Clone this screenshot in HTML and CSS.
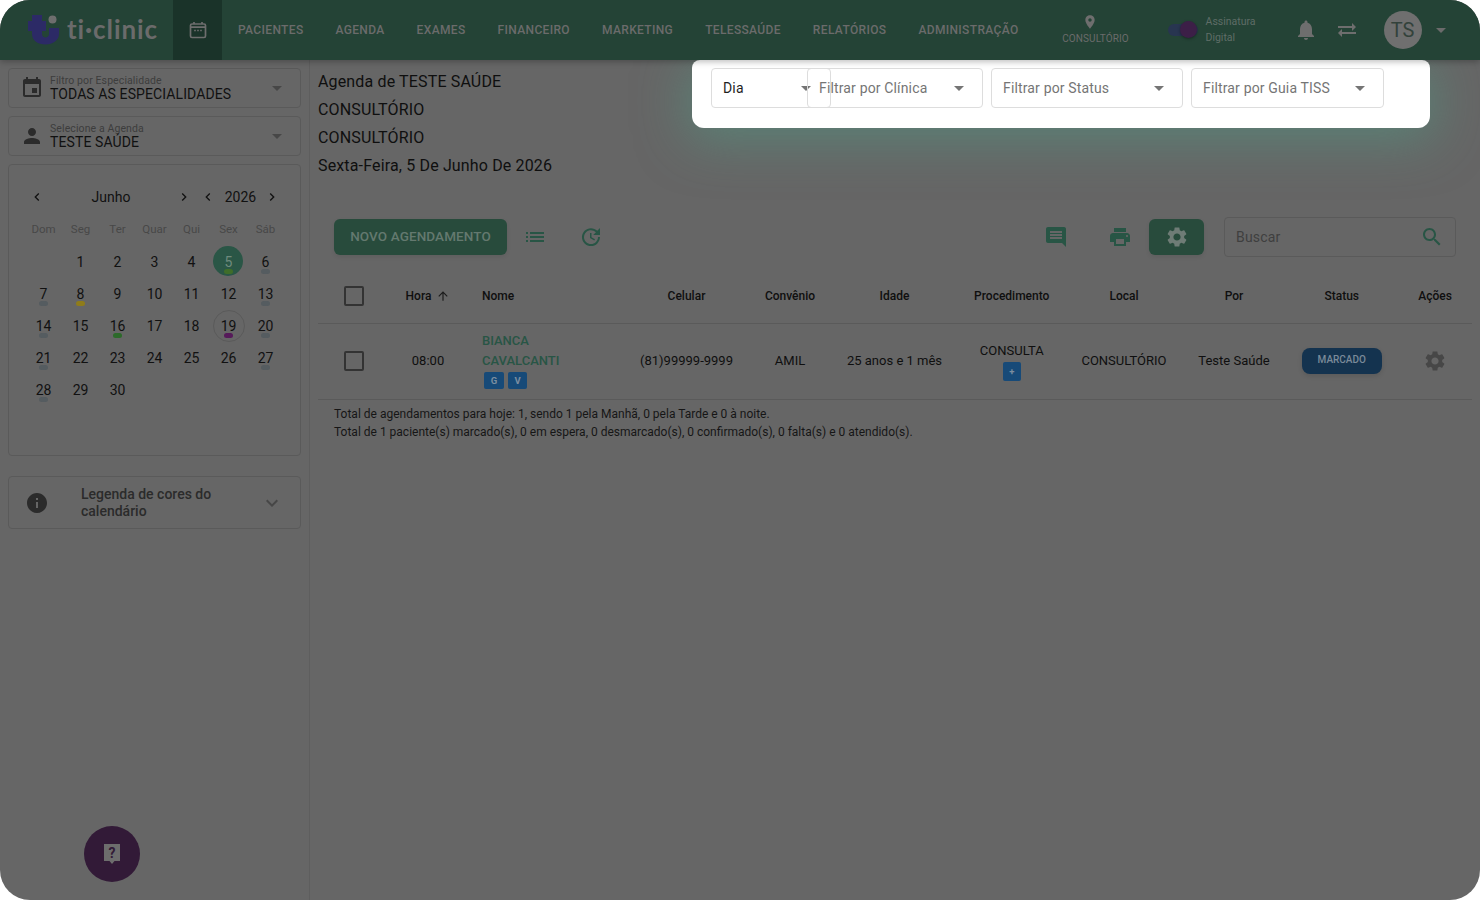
FILE: index.html
```html
<!DOCTYPE html>
<html lang="pt-BR">
<head>
<meta charset="utf-8">
<title>ti·clinic - Agenda</title>
<link rel="stylesheet" href="styles.css">
</head>
<body>
<svg class="sprite" aria-hidden="true">
  <symbol id="i-event" viewBox="0 0 24 24"><path d="M17 12h-5v5h5v-5zM16 1v2H8V1H6v2H5c-1.11 0-1.99.9-1.99 2L3 19c0 1.1.89 2 2 2h14c1.1 0 2-.9 2-2V5c0-1.1-.9-2-2-2h-1V1h-2zm3 18H5V8h14v11z"/></symbol>
  <symbol id="i-person" viewBox="0 0 24 24"><path d="M12 12c2.21 0 4-1.79 4-4s-1.79-4-4-4-4 1.79-4 4 1.79 4 4 4zm0 2c-2.67 0-8 1.34-8 4v2h16v-2c0-2.66-5.33-4-8-4z"/></symbol>
  <symbol id="i-info" viewBox="0 0 24 24"><path d="M12 2C6.48 2 2 6.48 2 12s4.48 10 10 10 10-4.48 10-10S17.52 2 12 2zm1 15h-2v-6h2v6zm0-8h-2V7h2v2z"/></symbol>
  <symbol id="i-left" viewBox="0 0 24 24"><path d="M15.41 7.41L14 6l-6 6 6 6 1.41-1.41L10.83 12z"/></symbol>
  <symbol id="i-right" viewBox="0 0 24 24"><path d="M10 6L8.59 7.41 13.17 12l-4.58 4.59L10 18l6-6z"/></symbol>
  <symbol id="i-more" viewBox="0 0 24 24"><path d="M16.59 8.59L12 13.17 7.41 8.59 6 10l6 6 6-6z"/></symbol>
  <symbol id="i-list" viewBox="0 0 24 24"><path d="M3 13h2v-2H3v2zm0 4h2v-2H3v2zm0-8h2V7H3v2zm4 4h14v-2H7v2zm0 4h14v-2H7v2zM7 7v2h14V7H7z"/></symbol>
  <symbol id="i-update" viewBox="0 0 24 24"><path d="M21 10.12h-6.78l2.74-2.82c-2.73-2.7-7.15-2.8-9.88-.1-2.73 2.71-2.73 7.08 0 9.79s7.15 2.71 9.88 0C18.32 15.65 19 14.08 19 12.1h2c0 1.98-.88 4.55-2.64 6.29-3.51 3.48-9.21 3.48-12.72 0-3.5-3.47-3.53-9.11-.02-12.58s9.14-3.47 12.65 0L21 3v7.12zM12.5 8v4.25l3.5 2.08-.72 1.21L11 13V8h1.5z"/></symbol>
  <symbol id="i-comment" viewBox="0 0 24 24"><path d="M22 4c0-1.1-.9-2-2-2H4c-1.1 0-2 .9-2 2v12c0 1.1.9 2 2 2h14l4 4V4zm-4 10H6v-2h12v2zm0-3H6V9h12v2zm0-3H6V6h12v2z"/></symbol>
  <symbol id="i-print" viewBox="0 0 24 24"><path d="M19 8H5c-1.66 0-3 1.34-3 3v6h4v4h12v-4h4v-6c0-1.66-1.34-3-3-3zm-3 11H8v-5h8v5zm3-7c-.55 0-1-.45-1-1s.45-1 1-1 1 .45 1 1-.45 1-1 1zm-1-9H6v4h12V3z"/></symbol>
  <symbol id="i-gear" viewBox="0 0 24 24"><path d="M19.14 12.94c.04-.3.06-.61.06-.94 0-.32-.02-.64-.07-.94l2.03-1.58c.18-.14.23-.41.12-.61l-1.92-3.32c-.12-.22-.37-.29-.59-.22l-2.39.96c-.5-.38-1.03-.7-1.62-.94l-.36-2.54c-.04-.24-.24-.41-.48-.41h-3.84c-.24 0-.43.17-.47.41l-.36 2.54c-.59.24-1.13.57-1.62.94l-2.39-.96c-.22-.08-.47 0-.59.22L2.74 8.87c-.12.21-.08.47.12.61l2.03 1.58c-.05.3-.09.63-.09.94s.02.64.07.94l-2.03 1.58c-.18.14-.23.41-.12.61l1.92 3.32c.12.22.37.29.59.22l2.39-.96c.5.38 1.03.7 1.62.94l.36 2.54c.05.24.24.41.48.41h3.84c.24 0 .44-.17.47-.41l.36-2.54c.59-.24 1.13-.56 1.62-.94l2.39.96c.22.08.47 0 .59-.22l1.92-3.32c.12-.22.07-.47-.12-.61l-2.01-1.58zM12 15.6c-1.98 0-3.6-1.62-3.6-3.6s1.62-3.6 3.6-3.6 3.6 1.62 3.6 3.6-1.62 3.6-3.6 3.6z"/></symbol>
  <symbol id="i-search" viewBox="0 0 24 24"><path d="M15.5 14h-.79l-.28-.27C15.41 12.59 16 11.11 16 9.5 16 5.91 13.09 3 9.5 3S3 5.91 3 9.5 5.91 16 9.5 16c1.61 0 3.09-.59 4.23-1.57l.27.28v.79l5 4.99L20.49 19l-4.99-5zm-6 0C7.01 14 5 11.99 5 9.5S7.01 5 9.5 5 14 7.01 14 9.5 11.99 14 9.5 14z"/></symbol>
  <symbol id="i-up" viewBox="0 0 24 24"><path d="M4 12l1.41 1.41L11 7.83V20h2V7.83l5.58 5.59L20 12l-8-8-8 8z"/></symbol>
  <symbol id="i-bell" viewBox="0 0 24 24"><path d="M12 22c1.1 0 2-.9 2-2h-4c0 1.1.89 2 2 2zm6-6v-5c0-3.07-1.64-5.64-4.5-6.32V4c0-.83-.67-1.5-1.5-1.5s-1.5.67-1.5 1.5v.68C7.63 5.36 6 7.92 6 11v5l-2 2v1h16v-1l-2-2z"/></symbol>
  <symbol id="i-swap" viewBox="0 0 24 24"><path d="M6.99 11L3 15l3.99 4v-3H21v-2H6.99v-3zM21 9l-3.99-4v3H3v2h14.01v3L21 9z"/></symbol>
  <symbol id="i-place" viewBox="0 0 24 24"><path d="M12 2C8.13 2 5 5.13 5 9c0 5.25 7 13 7 13s7-7.75 7-13c0-3.87-3.13-7-7-7zm0 9.5c-1.38 0-2.5-1.12-2.5-2.5s1.12-2.5 2.5-2.5 2.5 1.12 2.5 2.5-1.12 2.5-2.5 2.5z"/></symbol>
</svg>

<div class="app">
  <header class="topbar">
    <a class="logo">
      <svg class="logo-mark" viewBox="0 0 32 32" width="32" height="32" aria-hidden="true">
        <path class="logo-t" d="M4 1h10v6h4v10h-4v3c0 2 1.500 3.500 3.500 3.500s3.500-1.500 3.500-3.500v-6h10v6c0 6-6 10.500-13.500 10.500S4 26.500 4 20v-3H0V7h4z"/>
        <circle class="logo-dot" cx="24.500" cy="5.500" r="4"/>
      </svg>
      <span class="logo-text">ti·clinic</span>
    </a>
    <a class="cal-tab">
      <svg viewBox="0 0 18 18" width="18" height="18" class="cal-glyph" aria-hidden="true">
        <rect x="1.5" y="3" width="15" height="13.5" rx="1.5"/>
        <path d="M1.5 6.2h15M5 1v2M13 1v2"/>
        <path class="cal-dots" d="M5.2 9.5h1.6M8.2 9.5h1.6M11.2 9.5h1.6"/>
      </svg>
    </a>
    <nav class="nav">
      <a>Pacientes</a><a>Agenda</a><a>Exames</a><a>Financeiro</a><a>Marketing</a><a>Telessaúde</a><a>Relatórios</a><a>Administração</a>
    </nav>
    <div class="place">
      <svg class="ico16" aria-hidden="true"><use href="#i-place"/></svg>
      <span>CONSULTÓRIO</span>
    </div>
    <div class="toggle"><span class="knob"></span></div>
    <div class="sign">Assinatura<br>Digital</div>
    <svg class="ico24 top-ico bell" aria-hidden="true"><use href="#i-bell"/></svg>
    <svg class="ico24 top-ico swap" aria-hidden="true"><use href="#i-swap"/></svg>
    <div class="avatar">TS</div>
    <span class="caret caret-top"></span>
  </header>

  <div class="body">
    <aside class="sidebar">
      <div class="field">
        <svg class="ico24 dark" aria-hidden="true"><use href="#i-event"/></svg>
        <div class="field-text"><small>Filtro por Especialidade</small><b>TODAS AS ESPECIALIDADES</b></div>
        <span class="caret"></span>
      </div>
      <div class="field">
        <svg class="ico24 dark" aria-hidden="true"><use href="#i-person"/></svg>
        <div class="field-text"><small>Selecione a Agenda</small><b>TESTE SAÚDE</b></div>
        <span class="caret"></span>
      </div>
      <section class="calendar">
        <div class="cal-head">
          <svg class="ico16 black" aria-hidden="true"><use href="#i-left"/></svg>
          <span class="cal-month">Junho</span>
          <svg class="ico16 black" aria-hidden="true"><use href="#i-right"/></svg>
          <svg class="ico16 black year-prev" aria-hidden="true"><use href="#i-left"/></svg>
          <span class="cal-year">2026</span>
          <svg class="ico16 black" aria-hidden="true"><use href="#i-right"/></svg>
        </div>
        <div class="cal-grid">
          <span class="wd">Dom</span><span class="wd">Seg</span><span class="wd">Ter</span><span class="wd">Quar</span><span class="wd">Qui</span><span class="wd">Sex</span><span class="wd">Sáb</span>
          <span class="d"></span><span class="d">1</span><span class="d">2</span><span class="d">3</span><span class="d">4</span><span class="d sel">5<i class="dot olive"></i></span><span class="d">6<i class="dot"></i></span>
          <span class="d">7<i class="dot"></i></span><span class="d">8<i class="dot yellow"></i></span><span class="d">9</span><span class="d">10</span><span class="d">11</span><span class="d">12</span><span class="d">13<i class="dot"></i></span>
          <span class="d">14<i class="dot"></i></span><span class="d">15</span><span class="d">16<i class="dot leaf"></i></span><span class="d">17</span><span class="d">18</span><span class="d today">19<i class="dot purple"></i></span><span class="d">20<i class="dot"></i></span>
          <span class="d">21<i class="dot"></i></span><span class="d">22</span><span class="d">23</span><span class="d">24</span><span class="d">25</span><span class="d">26</span><span class="d">27<i class="dot"></i></span>
          <span class="d">28<i class="dot"></i></span><span class="d">29</span><span class="d">30</span>
        </div>
      </section>
      <section class="legend">
        <svg class="ico24 dark" aria-hidden="true"><use href="#i-info"/></svg>
        <span class="legend-text">Legenda de cores do calendário</span>
        <svg class="ico24 mid" aria-hidden="true"><use href="#i-more"/></svg>
      </section>
    </aside>

    <main class="main">
      <div class="titles">
        <p>Agenda de TESTE SAÚDE</p>
        <p>CONSULTÓRIO</p>
        <p>CONSULTÓRIO</p>
        <p>Sexta-Feira, 5 De Junho De 2026</p>
      </div>

      <div class="toolbar">
        <button class="btn">NOVO AGENDAMENTO</button>
        <svg class="ico24 green" aria-hidden="true"><use href="#i-list"/></svg>
        <svg class="ico24 green after-list" aria-hidden="true"><use href="#i-update"/></svg>
        <span class="spacer"></span>
        <svg class="ico24 green before-print" aria-hidden="true"><use href="#i-comment"/></svg>
        <svg class="ico24 green" aria-hidden="true"><use href="#i-print"/></svg>
        <button class="btn-gear"><svg class="ico24 light" aria-hidden="true"><use href="#i-gear"/></svg></button>
        <div class="search"><span>Buscar</span><svg class="ico24 green" aria-hidden="true"><use href="#i-search"/></svg></div>
      </div>

      <table class="table">
        <colgroup>
          <col class="c1"><col class="c2"><col class="c3"><col class="c4"><col class="c5"><col class="c6"><col class="c7"><col class="c8"><col class="c9"><col class="c10"><col class="c11">
        </colgroup>
        <thead>
          <tr>
            <th class="chk"><span class="box"></span></th>
            <th>Hora <svg class="ico14" aria-hidden="true"><use href="#i-up"/></svg></th>
            <th class="left">Nome</th>
            <th>Celular</th><th>Convênio</th><th>Idade</th><th>Procedimento</th><th>Local</th><th>Por</th><th>Status</th><th>Ações</th>
          </tr>
        </thead>
        <tbody>
          <tr>
            <td class="chk"><span class="box"></span></td>
            <td class="txt">08:00</td>
            <td class="left name-cell">
              <a class="name">BIANCA CAVALCANTI</a>
              <div class="chips"><span class="chip">G</span><span class="chip">V</span></div>
            </td>
            <td class="txt">(81)99999-9999</td>
            <td class="txt">AMIL</td>
            <td class="txt">25 anos e 1 mês</td>
            <td><div class="proc">CONSULTA</div><span class="chip plus">+</span></td>
            <td class="txt">CONSULTÓRIO</td>
            <td class="txt">Teste Saúde</td>
            <td><span class="status">MARCADO</span></td>
            <td><svg class="ico24 mid gear-row" aria-hidden="true"><use href="#i-gear"/></svg></td>
          </tr>
        </tbody>
      </table>

      <div class="totals">
        <p>Total de agendamentos para hoje: 1, sendo 1 pela Manhã, 0 pela Tarde e 0 à noite.</p>
        <p>Total de 1 paciente(s) marcado(s), 0 em espera, 0 desmarcado(s), 0 confirmado(s), 0 falta(s) e 0 atendido(s).</p>
      </div>
    </main>
  </div>

  <div class="filters">
    <div class="select sel-dia"><span class="val">Dia</span><span class="caret"></span></div>
    <div class="select sel-clinica"><span>Filtrar por Clínica</span><span class="caret"></span></div>
    <div class="select sel-status"><span>Filtrar por Status</span><span class="caret"></span></div>
    <div class="select sel-tiss"><span>Filtrar por Guia TISS</span><span class="caret"></span></div>
  </div>

  <button class="fab" aria-label="Ajuda">
    <svg viewBox="0 0 24 24" width="24" height="24" aria-hidden="true">
      <path class="fab-bubble" d="M4 2h16v17h-5.5L12 22l-2.500-3H4z"/>
      <text class="fab-q" x="12" y="15.500" text-anchor="middle">?</text>
    </svg>
  </button>
</div>
</body>
</html>
```
FILE: styles.css
```css
* { box-sizing: border-box; }
html, body { margin: 0; height: 100%; background: #fff; }
body { font-family: Roboto, "Liberation Sans", sans-serif; overflow: hidden; }
p { margin: 0; }
.sprite { position: absolute; width: 0; height: 0; }

.app {
  position: relative;
  width: 1480px;
  height: 900px;
  background: #666;
  border-radius: 30px;
  overflow: hidden;
  color: #0f0f0f;
  display: flex;
  flex-direction: column;
}

/* icons */
.ico14 { width: 14px; height: 14px; fill: #1c1c1c; vertical-align: -3px; margin-left: 2px; }
.ico16 { width: 16px; height: 16px; fill: #707070; flex: none; }
.ico24 { width: 24px; height: 24px; flex: none; }
.black { fill: #111; }
.dark { fill: #2b2b2b; }
.mid { fill: #474747; }
.green { fill: #285545; }
.light { fill: #6f7c76; }

.caret {
  width: 0; height: 0; flex: none;
  border-left: 5px solid transparent;
  border-right: 5px solid transparent;
  border-top: 5px solid #474747;
}

/* top bar */
.topbar {
  position: relative;
  z-index: 3;
  height: 60px;
  flex: none;
  background: #244336;
  display: flex;
  align-items: center;
  box-shadow: 0 2px 6px rgba(0,0,0,.25);
  color: #6b6b6b;
}
.logo { width: 173px; padding-left: 28px; display: flex; align-items: center; gap: 7px; flex: none; }
.logo-mark { flex: none; }
.logo-t { fill: #2c2a66; }
.logo-dot { fill: #6e6e6e; }
.logo-text { font-family: Lato, sans-serif; font-weight: 700; font-size: 26px; letter-spacing: .9px; color: #6b6b6b; line-height: 1; padding-bottom: 3px; }
.cal-tab { width: 49px; height: 60px; background: #1a3329; display: flex; align-items: center; justify-content: center; flex: none; }
.cal-glyph { fill: none; stroke: #6e6e6e; stroke-width: 1.700; }
.cal-dots { stroke-width: 1.400; }
.nav { display: flex; gap: 32px; margin-left: 16px; flex: none; }
.nav a { font-size: 12px; font-weight: 500; text-transform: uppercase; color: #6b6b6b; letter-spacing: .35px; }
.place { margin-left: 44px; width: 66px; display: flex; flex-direction: column; align-items: center; flex: none; font-size: 10px; letter-spacing: .1px; padding-bottom: 3px; gap: 3px; color: #6b6b6b; }
.place svg { fill: #6e6e6e; margin-right: 12px; }
.toggle { margin-left: 39px; width: 30px; height: 12px; border-radius: 6px; background: #283550; position: relative; flex: none; }
.knob { position: absolute; right: 1px; top: -3px; width: 17px; height: 17px; border-radius: 50%; background: #3c1f47; box-shadow: 0 1px 3px rgba(0,0,0,.35); }
.sign { margin-left: 8px; width: 71px; font-size: 10.500px; line-height: 16px; color: #5f6d67; flex: none; }
.top-ico { fill: #6e6e6e; }
.bell { margin-left: 17px; }
.swap { margin-left: 17px; }
.avatar { margin-left: 25px; width: 38px; height: 38px; border-radius: 50%; background: #6f6f6f; color: #33423b; font-size: 20px; font-weight: 400; display: flex; align-items: center; justify-content: center; flex: none; }
.caret-top { margin-left: 14px; border-top-color: #6b6b6b; }

/* layout */
.body { flex: 1; display: flex; min-height: 0; }
.sidebar { width: 310px; flex: none; border-right: 1px solid #5e5e5e; padding: 8px 8px 0; display: flex; flex-direction: column; gap: 8px; }
.main { flex: 1; padding: 8px; min-width: 0; }

/* sidebar */
.field { height: 40px; border: 1px solid #5a5a5a; border-radius: 4px; display: flex; align-items: center; padding: 0 18px 0 11px; }
.field-text { flex: 1; display: flex; flex-direction: column; margin-left: 6px; }
.field-text small { font-size: 10.500px; line-height: 13px; color: #3d3d3d; letter-spacing: .1px; }
.field-text b { font-size: 14px; line-height: 15px; font-weight: 400; color: #111; letter-spacing: .1px; }

.calendar { height: 292px; border: 1px solid #5a5a5a; border-radius: 4px; padding: 24px 15px 0 16px; }
.cal-head { display: flex; align-items: center; height: 16px; padding-left: 3.500px; font-size: 14px; color: #111; }
.cal-month { width: 131px; text-align: center; padding-left: 2px; }
.year-prev { margin-left: 8px; }
.cal-year { width: 48px; text-align: center; padding-left: 2px; }
.cal-grid { display: grid; grid-template-columns: repeat(7, 37px); grid-auto-rows: 32px; margin-top: 9px; }
.wd { font-size: 11.500px; color: #484848; text-align: center; line-height: 30px; height: 32px; }
.d { position: relative; font-size: 14px; color: #111; display: flex; align-items: center; justify-content: center; padding-bottom: 1px; }
.dot { position: absolute; left: 14px; top: 23px; width: 9px; height: 5px; border-radius: 3px; background: #555c60; }
.olive { background: #3f6d2a; }
.yellow { background: #8f7c1a; }
.leaf { background: #2c6a2a; }
.purple { background: #561a5a; }
.sel::before, .today::before {
  content: ""; position: absolute; left: 3px; top: 0; width: 30px; height: 30px; border-radius: 50%;
}
.sel { color: #6f8a7d; isolation: isolate; }
.sel::before { background: #2a5646; z-index: -1; }
.today::before { border: 1px solid #5a5a5a; }

.legend { margin-top: 12px; height: 53px; border: 1px solid #5a5a5a; border-radius: 4px; display: flex; align-items: center; padding: 0 16px; }
.legend-text { width: 162px; margin-left: 32px; font-size: 14px; font-weight: 500; line-height: 17px; color: #2b2b2b; }
.legend .mid { margin-left: auto; }

/* main */
.titles p { font-size: 16px; line-height: 28px; color: #0f0f0f; letter-spacing: .15px; }
.toolbar { display: flex; align-items: center; height: 40px; margin-top: 37px; padding: 0 16px; }
.btn { height: 36px; width: 173px; padding: 0 0 2px; border: 0; border-radius: 6px; background: #284b3c; color: #64796f; font: 500 13.500px Roboto, sans-serif; letter-spacing: .1px; margin-right: 16px; box-shadow: 0 2px 4px rgba(0,0,0,.08); }
.after-list { margin-left: 32px; }
.spacer { flex: 1; }
.before-print { margin-right: 40px; }
.btn-gear { width: 55px; height: 36px; margin-left: 17px; border: 0; border-radius: 6px; background: #284b3c; display: flex; align-items: center; justify-content: center; padding: 0; box-shadow: 0 2px 4px rgba(0,0,0,.08); }
.search { width: 232px; height: 40px; margin-left: 20px; border: 1px solid #5a5a5a; border-radius: 4px; display: flex; align-items: center; justify-content: space-between; padding: 0 11px; font-size: 14px; color: #3f3f3f; letter-spacing: .2px; }

.table { width: 1154px; table-layout: fixed; border-collapse: collapse; margin-top: 12px; font-size: 13px; color: #0f0f0f; }
.c1 { width: 72px; } .c2 { width: 76px; } .c3 { width: 158px; } .c4 { width: 125px; } .c5 { width: 82px; } .c6 { width: 127px; }
.c7 { width: 107.500px; } .c8 { width: 117px; } .c9 { width: 103px; } .c10 { width: 112.500px; } .c11 { width: 74px; }
.table th { height: 54px; font-size: 12px; font-weight: 500; padding: 0; text-align: center; border-bottom: 1px solid #5a5a5a; }
.table td { height: 76px; padding: 0; text-align: center; border-bottom: 1px solid #5a5a5a; }
.table td.txt { padding-bottom: 2px; }
.table .left { text-align: left; padding-left: 16px; }
.table .name-cell { padding-bottom: 3px; }
.table th.chk, .table td.chk { padding: 0 0 0 26px; text-align: left; }
.box { display: block; width: 20px; height: 20px; border: 2px solid #333; border-radius: 2px; }
.name { display: block; width: 90px; font-size: 13px; font-weight: 500; line-height: 20px; color: #285545; }
.chips { display: flex; gap: 4px; padding-left: 2px; height: 17px; margin-top: 1px; }
.chip { display: inline-flex; align-items: center; justify-content: center; width: 20px; height: 17px; border-radius: 2px; background: #174a78; color: #7c8ea0; font-size: 9.500px; font-weight: 700; }
.chip + .chip { width: 19px; }
.plus { display: flex; width: 18px; height: 19px; margin: 2px auto 0; }
.proc { line-height: 18px; }
.status { display: inline-flex; align-items: center; justify-content: center; width: 80px; height: 26px; border-radius: 8px; background: #14334f; color: #7b8a99; font-size: 10px; font-weight: 500; padding-bottom: 3px; box-shadow: 0 2px 5px rgba(0,0,0,.12); }
.gear-row { display: block; margin: 0 auto; }
.totals { padding: 5px 0 0 16px; font-size: 12px; line-height: 18px; color: #161616; }

/* filter popup */
.filters {
  position: absolute;
  z-index: 2;
  left: 692px; top: 60px;
  width: 738px; height: 68px;
  background: #fff;
  border-radius: 8px 8px 12px 12px;
  padding: 8px 0 0 19px;
  display: flex;
  gap: 8px;
  box-shadow: 0 8px 50px 4px rgba(80,160,135,.5);
}
.select { height: 40px; background: transparent; border: 1px solid #ddd; border-radius: 4px; display: flex; align-items: center; justify-content: space-between; font-size: 14px; color: #757575; letter-spacing: .15px; padding: 0 18px 0 11px; }
.select .caret { border-top-color: #757575; }
.val { color: #1f1f1f; }
.sel-dia { width: 120px; padding-right: 19px; }
.sel-clinica { width: 176px; margin-left: -32px; }
.sel-status { width: 192px; }
.sel-tiss { width: 193px; }

/* help */
.fab { position: absolute; left: 84px; top: 826px; width: 56px; height: 56px; border: 0; padding: 0; border-radius: 50%; background: #321a37; display: flex; align-items: center; justify-content: center; }
.fab-bubble { fill: #6d6d6d; }
.fab-q { fill: #321a37; font: 700 14px Roboto, sans-serif; }
```
